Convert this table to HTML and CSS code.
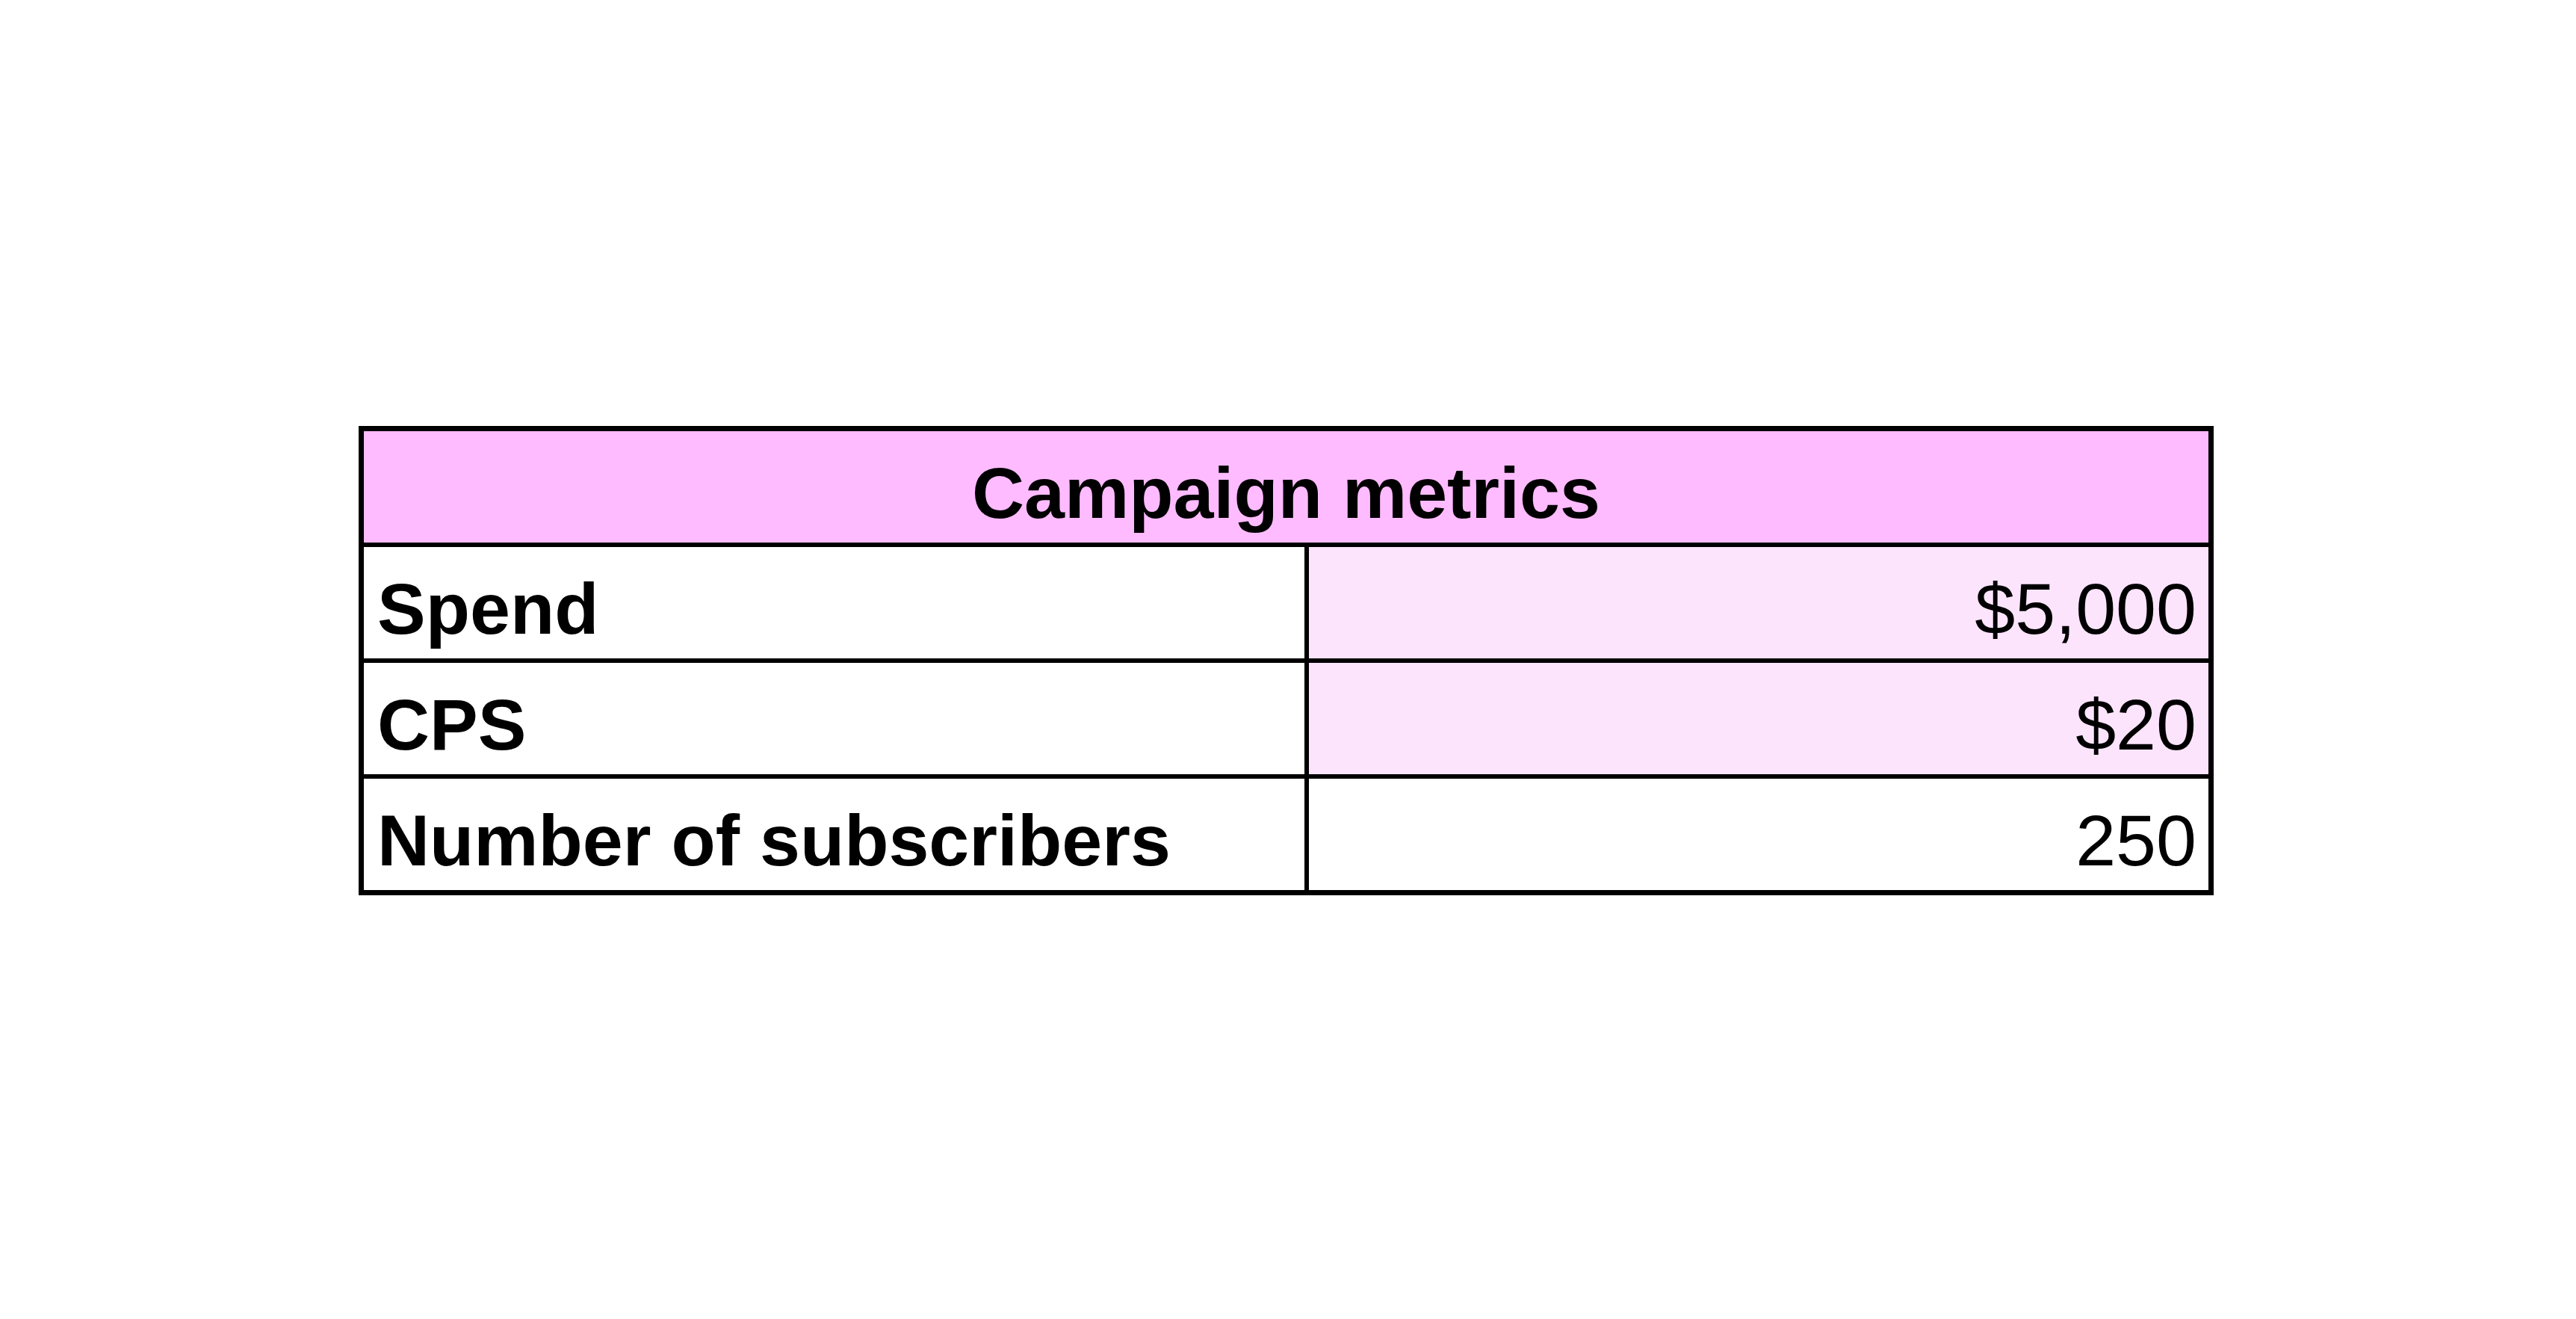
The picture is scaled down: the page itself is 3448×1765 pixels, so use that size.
FILE: index.html
```html
<!DOCTYPE html>
<html lang="en">
<head>
    <meta charset="UTF-8">
    <meta name="viewport" content="width=device-width, initial-scale=1.0">
    <title>Campaign metrics</title>
    <link rel="stylesheet" href="styles.css">
</head>
<body>
    <div class="metrics">
        <div class="cell title">Campaign metrics</div>

        <div class="cell label">Spend</div>
        <div class="cell value tint">$5,000</div>

        <div class="cell label">CPS</div>
        <div class="cell value tint">$20</div>

        <div class="cell label">Number of subscribers</div>
        <div class="cell value">250</div>
    </div>
</body>
</html>
```

FILE: styles.css
```css
* {
    margin: 0;
    padding: 0;
    box-sizing: border-box;
}

body {
    font-family: "Liberation Sans", Arial, sans-serif;
    background: #fff;
    color: #000;
    min-height: 100vh;
    display: flex;
    justify-content: center;
    align-items: center;
}

.metrics {
    display: grid;
    grid-template-columns: 1259px 1204px;
    grid-auto-rows: 149px;
    gap: 6px;
    padding: 7px;
    background: #000;
    margin: 3px 5px 0 0;
}

.cell {
    display: flex;
    align-items: flex-end;
    padding: 0 16px 10px 18px;
    background: #fff;
    font-size: 97px;
    white-space: nowrap;
}

.title {
    grid-column: 1 / -1;
    justify-content: center;
    padding-left: 16px;
    background: #ffbbff;
    font-weight: bold;
}

.label {
    font-weight: bold;
}

.value {
    justify-content: flex-end;
}

.tint {
    background: #fde4fd;
}
```
